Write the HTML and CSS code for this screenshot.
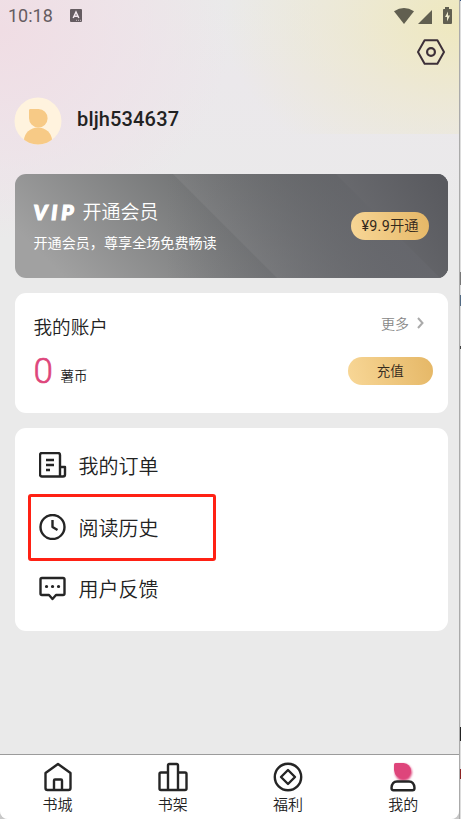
FILE: index.html
```
<!DOCTYPE html>
<html lang="zh-CN">
<head>
<meta charset="utf-8">
<meta name="viewport" content="width=device-width, initial-scale=1">
<title>我的</title>
<link rel="stylesheet" href="styles.css">
</head>
<body>
<div class="window">
<div class="app">
  <header class="status">
    <span class="time">10:18</span>
    <svg class="status-note" width="12" height="13" viewBox="0 0 12 13"><rect width="12" height="13" rx="1" fill="#655c61"/><path d="M3.200 9 6 3l2.800 6M4.200 7.200h3.600" fill="none" stroke="#f3e8ee" stroke-width="1.500"/><path d="M6 11.300h5" stroke="#f3e8ee" stroke-width=".7" stroke-dasharray="1 1"/></svg>
    <svg class="status-icons" width="58" height="18" viewBox="0 0 58 18" fill="#615f50"><path d="M0 4.200Q10 -2.200 20 4.200L10 17Z"/><path d="M24 17 38 3V17Z"/><path d="M51 0h4v2h2.200q.8 0 .8.800V16q0 1-1 1h-7.200q-.8 0-.8-1V2.800q0-.8.8-.8H51Z"/><path d="M54 4.500 51 10h2v4.500l3-6h-2Z" fill="#eeeacb"/></svg>
  </header>
  <div class="tools">
    <svg width="28" height="26" viewBox="0 0 28 26" fill="none" stroke="#3d3039" stroke-width="2" stroke-linejoin="round"><path d="M7.600 1.200H20.400L27 13 20.400 24.800H7.600L1 13Z"/><circle cx="14" cy="13" r="3.900" stroke-width="2.200"/></svg>
  </div>
  <section class="profile">
    <svg width="48" height="48" viewBox="0 0 48 48"><defs><clipPath id="face"><circle cx="24" cy="24" r="23.500"/></clipPath></defs><circle cx="24" cy="24" r="23.500" fill="#fff3de"/><g fill="#f7ca86" clip-path="url(#face)"><path d="M16 12h8.500a9.300 9.300 0 1 1-9.500 9.300v-7.800q0-1.500 1-1.500Z"/><ellipse cx="24" cy="43.500" rx="14" ry="13"/></g></svg>
    <h1>bljh534637</h1>
  </section>
  <section class="vip">
    <svg class="facets" viewBox="0 0 433 104" preserveAspectRatio="none"><defs><linearGradient id="a" gradientUnits="userSpaceOnUse" x1="40" y1="95" x2="165" y2="-30"><stop stop-color="#a1a1a1"/><stop offset="1" stop-color="#6e7071"/></linearGradient><linearGradient id="b" gradientUnits="userSpaceOnUse" x1="205" y1="115" x2="315" y2="-10"><stop stop-color="#8d8e8f"/><stop offset="1" stop-color="#606263"/></linearGradient><linearGradient id="tint" x1="0" x2="1"><stop offset=".35" stop-color="#66676d" stop-opacity="0"/><stop offset=".9" stop-color="#66676d" stop-opacity=".85"/></linearGradient><linearGradient id="c" gradientUnits="userSpaceOnUse" x1="340" y1="75" x2="433" y2="20"><stop stop-color="#6c6d71"/><stop offset="1" stop-color="#595a5f"/></linearGradient></defs><rect width="433" height="104" fill="url(#a)"/><path d="M158 0 262 104H433V0Z" fill="url(#b)"/><rect width="433" height="104" fill="url(#tint)"/><path d="M321 0 425 104H433V0Z" fill="url(#c)"/></svg>
    <div class="vip-copy">
      <h2><span class="vip-mark">VIP</span>开通会员</h2>
      <p>开通会员，尊享全场免费畅读</p>
    </div>
    <button class="gold join"><span class="price">¥9.9</span>开通</button>
  </section>
  <section class="card account">
    <div class="row"><h2>我的账户</h2><a class="more">更多 <svg width="7" height="12" viewBox="0 0 7 12" fill="none" stroke="#aaa" stroke-width="2"><path d="m1 1 4.500 5L1 11"/></svg></a></div>
    <div class="row balance"><div class="amount"><b>0</b><span>薯币</span></div><button class="gold charge">充值</button></div>
  </section>
  <section class="card menu">
    <a><svg width="28" height="26" viewBox="0 0 28 26"><path d="M21 24.500H3q-2 0-2-2V3q0-2 2-2h16q2 0 2 2v21.500h3q2 0 2-2V15h-5"/><path d="M7 8h8M7 13h8M7 18h4"/></svg>我的订单</a>
    <a class="marked"><svg width="28" height="26" viewBox="0 0 28 26"><circle cx="13.500" cy="13" r="12"/><path d="M13.500 6v7l5 3"/></svg>阅读历史</a>
    <a><svg width="28" height="26" viewBox="0 0 28 26"><path d="M3 2h21q1.500 0 1.500 1.500v14q0 1.500-1.500 1.500h-7l-3.500 4-3.500-4H3q-1.500 0-1.500-1.500v-14Q1.500 2 3 2Z"/><path d="M7.500 10.500h.1M13.500 10.500h.1M19.500 10.500h.1" stroke-linecap="round" stroke-width="3.200"/></svg>用户反馈</a>
  </section>
  <nav class="tabs">
    <a><svg width="30" height="30" viewBox="0 0 30 30"><path d="M2.500 11v15q0 2 2 2h21q2 0 2-2V11L15 2Z"/><path d="M11 28V18.500q0-1 1-1h6q1 0 1 1V28"/></svg>书城</a>
    <a><svg width="30" height="30" viewBox="0 0 30 30"><path d="M10 28V3.500q0-1.500 1.500-1.500h7Q20 2 20 3.500V28M10 10.500H3q-1.500 0-1.500 1.500v14.500Q1.500 28 3 28h24q1.500 0 1.500-1.500V12q0-1.500-1.500-1.500h-7"/></svg>书架</a>
    <a><svg width="30" height="30" viewBox="0 0 30 30"><circle cx="15" cy="15" r="13.200"/><path d="m15 8 7 7-7 7-7-7Z"/></svg>福利</a>
    <a><svg width="30" height="30" viewBox="0 0 30 30"><defs><filter id="glow" x="-20%" y="-20%" width="140%" height="140%"><feGaussianBlur stdDeviation="1"/></filter></defs><g fill="#de457b" stroke="none"><path d="M8 2h7.500a8.500 8.500 0 1 1-8.500 9V3.500Q7 2 8 2Z" filter="url(#glow)"/><path d="M7.500 1h8a7.800 7.800 0 0 1 7.500 8q-.5 7-8 7.500-8-.5-9-8.500V2.500Q6 1 7.500 1Z"/></g><path d="M9 19.500h12q5 0 5.500 6.500 0 2.300-2 2.300h-19q-2 0-2-2.300Q4 19.500 9 19.500Z" fill="#fff"/></svg>我的</a>
  </nav>
</div>
<div class="edge"></div>
</div>
</body>
</html>
```
FILE: styles.css
```
* { box-sizing: border-box; }
body, h1, h2, p { margin: 0; }
body {
  width: 461px;
  height: 819px;
  overflow: hidden;
  font-family: Roboto, "Noto Sans CJK SC", sans-serif;
  font-weight: 350;
  color: #222;
}
h2 { font-weight: 350; }
svg { display: block; flex: none; }
.window { display: flex; height: 819px; background: #c8c8c8; }
.app {
  width: 459px;
  height: 819px;
  display: flex;
  flex-direction: column;
  border-radius: 0 0 8px 8px;
  overflow: hidden;
  background:
    radial-gradient(ellipse 235px 165px at 459px 20px, rgba(239, 232, 187, .95), rgba(238, 232, 201, .6) 50%, transparent) 0 0 / 459px 134px no-repeat,
    radial-gradient(ellipse 230px 210px at 0 30px, #f0dde4, rgba(239, 225, 232, .7) 55%, transparent),
    linear-gradient(#eaeaea, #ebe8eb 80px, #eaeaea 230px);
}
.edge {
  width: 2px;
  border-left: 1px solid #aaa;
  background: linear-gradient(#35537f 0 1px, #ddd 1px 272px, #777 272px 285px, #ddd 285px 295px, #526a83 295px 306px, #ddd 306px 346px, #444 346px 349px, #ddd 349px 727px, #222 727px 741px, #ddd 741px 769px, #8d2323 769px 779px, #ddd 779px);
}
.status {
  height: 32px;
  padding: 0 7px 0 8px;
  display: flex;
  align-items: center;
  font-size: 18px;
  font-weight: 400;
  color: #655c61;
}
.time { width: 62px; margin-top: -1px; }
.status-note { margin-top: -1px; }
.status-icons { margin-left: auto; margin-top: -1px; }
.tools { height: 41px; padding: 7px 14px 0 0; display: flex; justify-content: flex-end; }
.profile { height: 101px; padding: 24px 14px 0; display: flex; gap: 15px; }
.profile h1 { font-size: 20px; line-height: 24px; margin-top: 10px; font-weight: 500; letter-spacing: .15px; }
.vip {
  height: 104px;
  margin: 0 11.500px 0 15px;
  flex: none;
  border-radius: 11px;
  overflow: hidden;
  padding: 0 18.500px;
  display: grid;
  grid-template: 104px / 1fr auto;
  align-items: center;
}
.facets { grid-area: 1 / 1 / 2 / 3; width: auto; height: 104px; margin: 0 -18.500px; }
.vip-copy { grid-area: 1 / 1; color: #fff; z-index: 1; }
.vip h2 { display: flex; align-items: center; font-size: 19px; line-height: 28px; }
.vip-mark { width: 49px; margin-top: -2px; font: italic 900 21px/28px Lato, sans-serif; letter-spacing: 4px; -webkit-text-stroke: 1.200px #fff; }
.vip p { font-size: 14.100px; line-height: 20px; margin-top: 6px; font-weight: 400; }
.gold {
  border: 0;
  padding: 0;
  height: 28px;
  border-radius: 14px;
  background: linear-gradient(75deg, #f8d797, #e5b766);
  color: #33291c;
  font: 350 13.500px/28px Roboto, "Noto Sans CJK SC", sans-serif;
}
.join { grid-area: 1 / 2; width: 78px; font-size: 14.300px; z-index: 1; }
.price { font-weight: 400; letter-spacing: .3px; }
.card { margin: 15px 11.500px 0 15px; background: #fff; border-radius: 11px; flex: none; }
.account { height: 119.500px; padding: 18px 14.500px 0 18.500px; }
.row { display: flex; align-items: center; justify-content: space-between; height: 28px; }
.row h2 { font-size: 18.600px; }
.more { display: flex; align-items: center; gap: 8px; margin: -5px 9px 0 0; font-size: 14px; color: #888; }
.balance { margin-top: 18px; }
.amount { display: flex; align-items: baseline; gap: 8px; font-size: 13.500px; }
.amount b { width: 19px; margin-top: 2px; font-size: 35px; line-height: 28px; font-weight: 300; color: #de457b; -webkit-text-stroke: .6px #de457b; }
.amount span { position: relative; top: -1.500px; }
.charge { width: 85.500px; }
.menu { height: 203px; padding: 7px 13px 0; }
.menu a { display: flex; align-items: center; gap: 12px; height: 61.500px; padding-left: 10.500px; font-size: 20px; }
.menu svg, .tabs svg { fill: none; stroke: #252525; stroke-width: 2.400; stroke-linejoin: round; }
.menu .marked { width: 188px; height: 67px; margin: -2.500px 0; padding-left: 7.500px; border: 3px solid #ff2114; border-radius: 3px; }
.tabs {
  height: 65px;
  margin-top: auto;
  display: grid;
  grid-template-columns: repeat(4, 115.200px);
  border-top: 1px solid #9b9b9b;
  background: #fff;
  font-size: 15px;
  line-height: 22px;
}
.tabs a { display: flex; flex-direction: column; align-items: center; padding-top: 7px; }
.tabs svg { margin-bottom: 2px; }
```
